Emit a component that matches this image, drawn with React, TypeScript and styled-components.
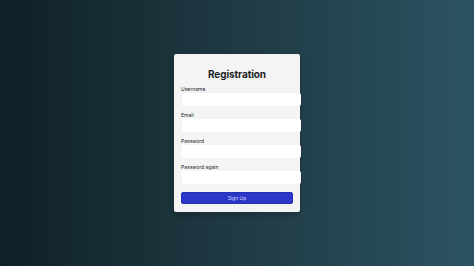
import { createGlobalStyle } from 'styled-components';
import styled from 'styled-components';

const GlobalStyle = createGlobalStyle`
  * {
    box-sizing: border-box;
  }
  html, body {
    margin: 0;
    padding: 0;
  }
  body {
    font-family: "Inter", "Liberation Sans", sans-serif;
    background: linear-gradient(to right, #0f2027, #203a43, #2c5364);
    min-height: 100vh;
  }
`

const Page = styled.div`
  min-height: 100vh;
  display: flex;
  align-items: center;
  justify-content: center;
`

const Card = styled.div`
  width: 126px;
  padding: 13px 7px 8px;
  background-color: #f4f4f4;
  border-radius: 2px;
  box-shadow: 0 2px 6px rgba(0, 0, 0, 0.25);
`

const Title = styled.h1`
  margin: 0 0 5px;
  font-size: 10px;
  line-height: 14px;
  font-weight: 700;
  text-align: center;
  color: #1b1f24;
  letter-spacing: -0.1px;
`

const Form = styled.form`
  display: flex;
  flex-direction: column;
`

const Label = styled.label`
  display: block;
  font-size: 5px;
  line-height: 6px;
  color: #222;
  margin-bottom: 1px;
`

const Input = styled.input`
  display: block;
  width: calc(100% + 7px);
  height: 13px;
  margin: 0 0 6px 1px;
  padding: 0 3px;
  border: none;
  border-radius: 2px;
  background-color: #ffffff;
  font-size: 5px;
  outline: none;
`

const Button = styled.button`
  margin-top: 2px;
  height: 12px;
  width: 100%;
  padding: 0;
  border: 1px solid #2430b0;
  border-radius: 2px;
  background-color: #2b37c8;
  color: #d2d5ff;
  font-family: inherit;
  font-size: 5px;
  cursor: pointer;
`

const fields = [
  { name: 'username', label: 'Username', type: 'text' },
  { name: 'email', label: 'Email', type: 'email' },
  { name: 'password', label: 'Password', type: 'password' },
  { name: 'passwordAgain', label: 'Password again', type: 'password' },
]

const App = () => {
  return (
    <>
      <GlobalStyle />
      <Page>
        <Card>
          <Title>Registration</Title>
          <Form onSubmit={e => e.preventDefault()}>
            {fields.map(field => (
              <div key={field.name}>
                <Label htmlFor={field.name}>{field.label}</Label>
                <Input id={field.name} type={field.type} />
              </div>
            ))}
            <Button type="submit">Sign Up</Button>
          </Form>
        </Card>
      </Page>
    </>
  )
}

export default App;
